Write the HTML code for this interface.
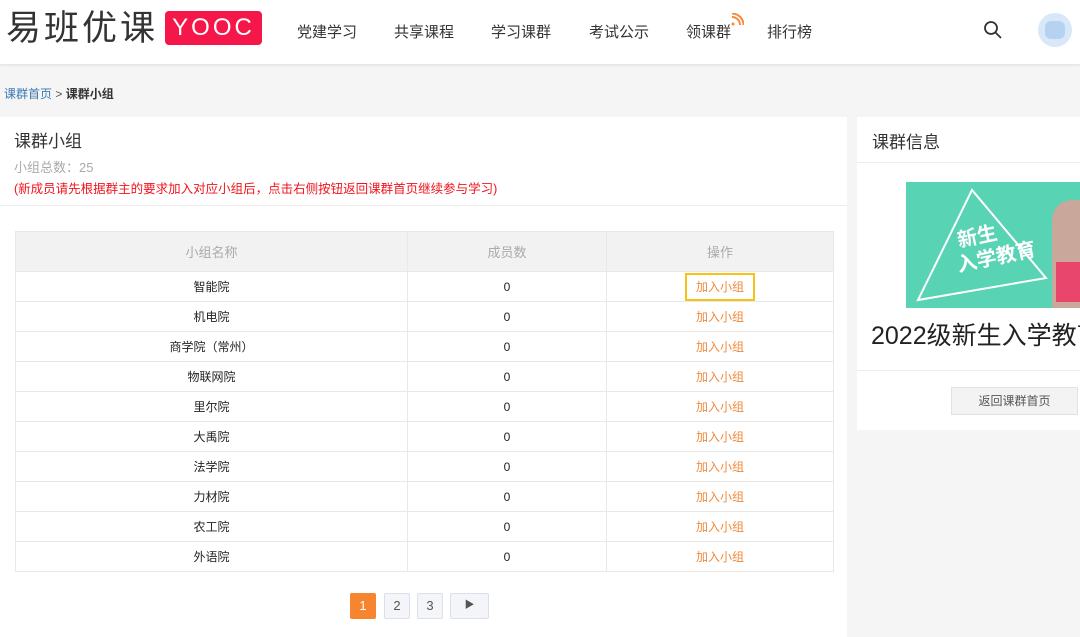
<!DOCTYPE html>
<html><head><meta charset="utf-8"><style>
*{margin:0;padding:0;box-sizing:border-box}
body{width:1080px;height:632px;overflow:hidden;background:#f5f5f5;font-family:"Liberation Sans","Noto Sans CJK SC",sans-serif;position:relative}
.a{position:absolute}
.hdr{left:0;top:0;width:1080px;height:64px;background:#fff;box-shadow:0 1px 3px rgba(0,0,0,.1)}
.nav{top:21px;font-size:15px;color:#333}
table{border-collapse:collapse;font-size:12px;color:#222}
td,th{border:1px solid #e8e8e8;text-align:center;height:30px;font-weight:normal}
th{background:#f2f2f2;color:#aaa;height:40px;font-size:13px}
.j{color:#f08a3c}
.pg{top:593px;height:26px;border:1px solid #dde;background:#f4f5f8;font-size:13px;color:#555;text-align:center;line-height:24px;border-radius:2px}
</style></head><body>
<div class="a hdr"></div>
<div class="a" style="left:6px;top:8px;font-size:35px;color:#333;letter-spacing:3px;line-height:42px">易班优课</div>
<div class="a" style="left:165px;top:11px;width:97px;height:34px;background:#f5164a;border-radius:4px;color:#fff;font-size:24px;text-align:center;line-height:34px;letter-spacing:3px">YOOC</div>
<div class="a nav" style="left:297px">党建学习</div>
<div class="a nav" style="left:394px">共享课程</div>
<div class="a nav" style="left:491px">学习课群</div>
<div class="a nav" style="left:589px">考试公示</div>
<div class="a nav" style="left:686px">领课群</div>
<svg class="a" style="left:730px;top:13px" width="14" height="14"><path d="M2 4 A8 8 0 0 1 10 12" fill="none" stroke="#f7893b" stroke-width="2"/><path d="M2 0.5 A11.5 11.5 0 0 1 13.5 12" fill="none" stroke="#f7893b" stroke-width="2"/><circle cx="3" cy="11" r="1.5" fill="#f7893b"/></svg>
<div class="a nav" style="left:767px">排行榜</div>
<svg class="a" style="left:983px;top:20px" width="20" height="20"><circle cx="8" cy="8" r="6" fill="none" stroke="#333" stroke-width="1.8"/><line x1="12.5" y1="12.5" x2="18" y2="18" stroke="#333" stroke-width="1.8"/></svg>
<div class="a" style="left:1038px;top:13px;width:34px;height:34px;border-radius:50%;background:#d8e8f8"><div class="a" style="left:7px;top:8px;width:20px;height:18px;background:#b5d3f0;border-radius:6px"></div></div>
<div class="a" style="left:4px;top:85px;font-size:12px;color:#3a78b0">课群首页 <span style="color:#555">&gt;</span> <span style="color:#333;font-weight:bold">课群小组</span></div>
<div class="a" style="left:0;top:117px;width:847px;height:520px;background:#fff"></div>
<div class="a" style="left:0;top:205px;width:847px;height:1px;background:#eee"></div>
<div class="a" style="left:14px;top:127px;font-size:17px;color:#333">课群小组</div>
<div class="a" style="left:14px;top:157px;font-size:13px;color:#aaa">小组总数：25</div>
<div class="a" style="left:14px;top:178px;font-size:12.5px;color:#f0141e">(新成员请先根据群主的要求加入对应小组后，点击右侧按钮返回课群首页继续参与学习)</div>
<table class="a" style="left:15px;top:231px;width:819px">
<tr><th style="width:392px">小组名称</th><th style="width:199px">成员数</th><th>操作</th></tr>
<tr><td>智能院</td><td>0</td><td class="j"><span style="border:2px solid #f5c218;padding:5px 9px">加入小组</span></td></tr>
<tr><td>机电院</td><td>0</td><td class="j">加入小组</td></tr>
<tr><td>商学院（常州）</td><td>0</td><td class="j">加入小组</td></tr>
<tr><td>物联网院</td><td>0</td><td class="j">加入小组</td></tr>
<tr><td>里尔院</td><td>0</td><td class="j">加入小组</td></tr>
<tr><td>大禹院</td><td>0</td><td class="j">加入小组</td></tr>
<tr><td>法学院</td><td>0</td><td class="j">加入小组</td></tr>
<tr><td>力材院</td><td>0</td><td class="j">加入小组</td></tr>
<tr><td>农工院</td><td>0</td><td class="j">加入小组</td></tr>
<tr><td>外语院</td><td>0</td><td class="j">加入小组</td></tr>
</table>
<div class="a pg" style="left:350px;width:26px;background:#f7852f;border-color:#f7852f;color:#fff">1</div>
<div class="a pg" style="left:384px;width:26px">2</div>
<div class="a pg" style="left:417px;width:26px">3</div>
<div class="a pg" style="left:450px;width:39px;font-size:10px">▶</div>
<div class="a" style="left:857px;top:117px;width:223px;height:313px;background:#fff"></div>
<div class="a" style="left:857px;top:162px;width:223px;height:1px;background:#eee"></div>
<div class="a" style="left:857px;top:370px;width:223px;height:1px;background:#eee"></div>
<div class="a" style="left:872px;top:128px;font-size:17px;color:#333">课群信息</div>
<div class="a" style="left:906px;top:182px;width:174px;height:126px;background:#58d3b4;overflow:hidden">
<svg width="174" height="126" style="position:absolute;left:0;top:0"><polygon points="66,8 12,118 140,96" fill="none" stroke="#fff" stroke-width="2"/></svg>
<div class="a" style="left:48px;top:40px;color:#fff;font-size:20px;font-weight:bold;transform:rotate(-12deg);line-height:24px">&nbsp;新生<br>入学教育</div>
<div class="a" style="left:146px;top:18px;width:40px;height:110px;background:#c9a79a;border-radius:20px 0 0 0"></div>
<div class="a" style="left:150px;top:80px;width:30px;height:40px;background:#e8466c"></div>
</div>
<div class="a" style="left:871px;top:316px;font-size:25px;color:#222;white-space:nowrap">2022级新生入学教育</div>
<div class="a" style="left:951px;top:387px;width:127px;height:28px;background:#f3f3f3;border:1px solid #e2e2e2;font-size:12px;color:#555;text-align:center;line-height:26px">返回课群首页</div>
</body></html>
